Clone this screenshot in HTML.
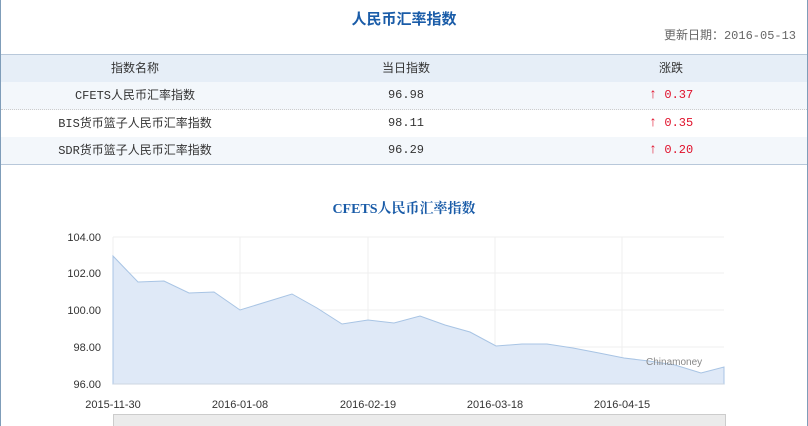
<!DOCTYPE html>
<html><head><meta charset="utf-8"><style>
body{margin:0;width:808px;height:426px;overflow:hidden;background:#fff;font-family:"Liberation Sans","Noto Sans CJK SC",sans-serif;position:relative}
.frame{position:absolute;left:0;top:0;width:806px;height:426px;border-left:1px solid #7f9db9;border-right:1px solid #7f9db9}
.t{position:absolute;left:0;width:808px;text-align:center;color:#1a5ca8;font-weight:bold}
.row{position:absolute;left:1px;width:806px;height:27px;font-size:12px;line-height:27px;color:#333}
.row span{position:absolute;top:0;text-align:center}
.m{font-family:"Liberation Mono","Noto Sans CJK SC",monospace}
.c1{left:34px;width:200px}.c2{left:310px;width:190px}.c3{left:575px;width:190px;color:#e0102a}
.ar{font-weight:bold;font-size:14px}
</style></head><body>
<div class="frame"></div>
<div class="t" style="top:8px;font-size:15px">人民币汇率指数</div>
<div style="position:absolute;right:12px;top:26px;font-size:12px;color:#666">更新日期：<span class="m">2016-05-13</span></div>
<div class="row" style="top:54px;background:#e6eef7;border-top:1px solid #b8c8da;border-bottom:1px dotted #ccc"><span class="c1">指数名称</span><span class="c2">当日指数</span><span class="c3" style="color:#333">涨跌</span></div>
<div class="row" style="top:82px;background:#f3f7fb;border-bottom:1px dotted #ccc"><span class="c1"><span class="m" style="position:static">CFETS</span>人民币汇率指数</span><span class="c2 m">96.98</span><span class="c3 m"><b class="ar">↑</b> 0.37</span></div>
<div class="row" style="top:110px;background:#fff;border-bottom:1px dotted #ccc"><span class="c1"><span class="m" style="position:static">BIS</span>货币篮子人民币汇率指数</span><span class="c2 m">98.11</span><span class="c3 m"><b class="ar">↑</b> 0.35</span></div>
<div class="row" style="top:137px;background:#f3f7fb;border-bottom:1px solid #b8c8da"><span class="c1"><span class="m" style="position:static">SDR</span>货币篮子人民币汇率指数</span><span class="c2 m">96.29</span><span class="c3 m"><b class="ar">↑</b> 0.20</span></div>
<div class="t" style="top:198px;font-size:14px;font-family:'Liberation Serif','Noto Serif CJK SC',serif">CFETS人民币汇率指数</div>
<svg width="808" height="426" style="position:absolute;left:0;top:0" font-family="Liberation Sans,sans-serif" font-size="11" fill="#333">
<g stroke="#efefef"><line x1="113" y1="237" x2="724" y2="237"/><line x1="113" y1="273" x2="724" y2="273"/><line x1="113" y1="310" x2="724" y2="310"/><line x1="113" y1="347" x2="724" y2="347"/>
<line x1="240" y1="237" x2="240" y2="384"/><line x1="368" y1="237" x2="368" y2="384"/><line x1="495" y1="237" x2="495" y2="384"/><line x1="622" y1="237" x2="622" y2="384"/><line x1="113" y1="237" x2="113" y2="384"/></g>
<path d="M113,256 L138,282 164,281 189,293 214,292 240,310 292,294 317,308 342,324 368,320 394,323 420,316 445,325 470,332 496,346 522,344 547,344 573,348 599,353 624,358 649,361 675,365 701,373 724,367 L724,384 L113,384Z" fill="#dfe9f7" stroke="#a8c4e4"/>
<line x1="113" y1="384" x2="724" y2="384" stroke="#ccd6e0"/>
<g text-anchor="end"><text x="101" y="241">104.00</text><text x="101" y="277">102.00</text><text x="101" y="314">100.00</text><text x="101" y="351">98.00</text><text x="101" y="388">96.00</text></g>
<g text-anchor="middle"><text x="113" y="408">2015-11-30</text><text x="240" y="408">2016-01-08</text><text x="368" y="408">2016-02-19</text><text x="495" y="408">2016-03-18</text><text x="622" y="408">2016-04-15</text></g>
<text x="646" y="365" font-size="10" fill="#888">Chinamoney</text>
<rect x="113.5" y="414.5" width="612" height="14" fill="#ebebeb" stroke="#ccc"/>
</svg>
</body></html>
